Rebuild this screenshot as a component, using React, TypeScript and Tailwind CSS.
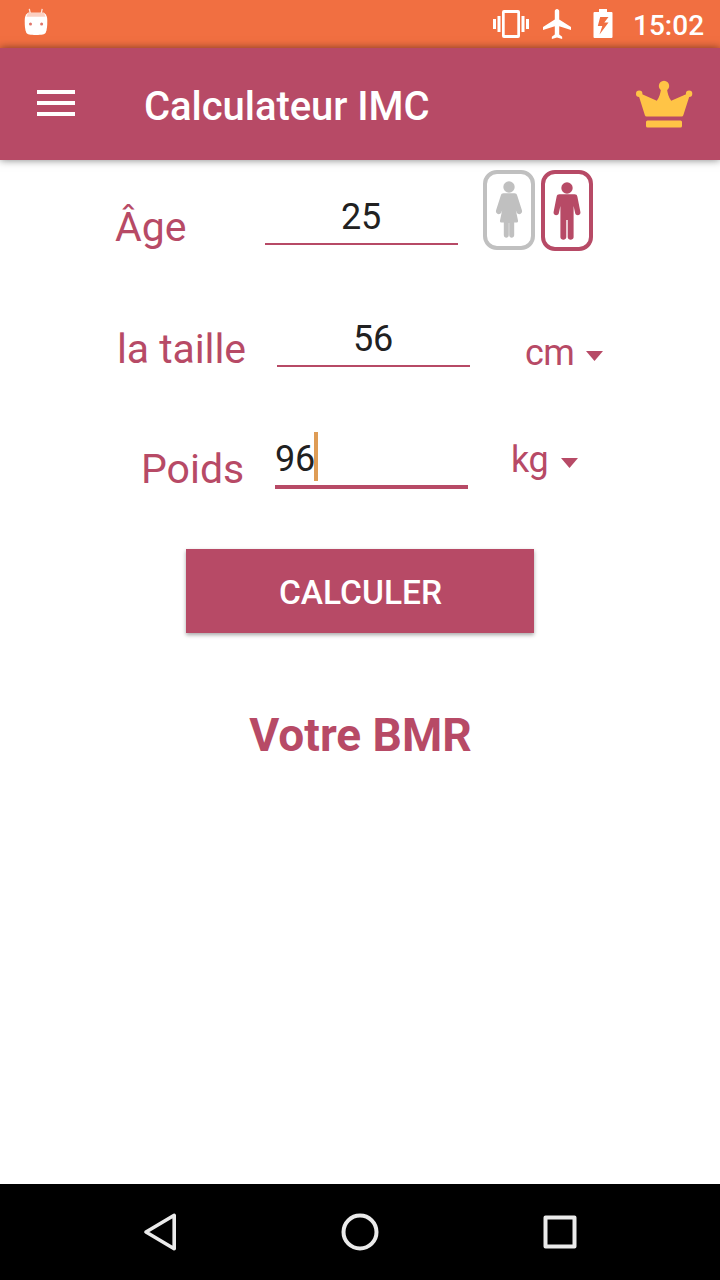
import type { ReactNode } from 'react'

type Field = {
  id: string
  label: string
  value: string
  row: string
  labelClass: string
  focused?: boolean
  unit?: string
  unitClass?: string
}

const fields: Field[] = [
  {
    id: 'age',
    label: 'Âge',
    value: '25',
    row: 'h-[122px] pl-[115px]',
    labelClass: 'w-[150px]',
  },
  {
    id: 'height',
    label: 'la taille',
    value: '56',
    row: 'h-[120px] pl-[117px]',
    labelClass: 'w-[160px] tracking-[-0.1px]',
    unit: 'cm',
    unitClass: 'mt-[47px] ml-[55px] w-[78px]',
  },
  {
    id: 'weight',
    label: 'Poids',
    value: '96',
    row: 'h-[87px] pl-[141px]',
    labelClass: 'w-[134px]',
    focused: true,
    unit: 'kg',
    unitClass: 'mt-[34px] ml-[43px] w-[67px]',
  },
]

function StatusBar() {
  return (
    <div className="flex h-12 items-center bg-[#f16f41] text-white">
      <svg className="ml-6 h-8 w-6 shrink-0" viewBox="0 0 24 32" fill="none">
        <path d="M6.5 6.5 5.3.8M17 6.5 18.2.8" stroke="#fde3da" strokeWidth="1.3" />
        <path d="M4 4.8h16c2.5 1.7 3.3 4 3.3 8 0 5-.3 9-1.6 12-.8 1.8-4 2.2-9.7 2.2s-8.9-.4-9.7-2.2C1 21.8.7 17.8.7 12.8c0-4 .8-6.3 3.3-8z" fill="#fff" />
        <path d="M4 4.8h16l1.5 4H2.300z" fill="#fbd0c2" />
        <circle cx="6.5" cy="16" r="1.5" fill="#e0756a" />
        <circle cx="17.6" cy="16" r="1.5" fill="#e0756a" />
      </svg>
      <svg className="ml-auto h-[30px] w-9" viewBox="0 0 36 30" fill="currentColor">
        <path fillRule="evenodd" d="M11 1h14a2 2 0 0 1 2 2v24a2 2 0 0 1-2 2H11a2 2 0 0 1-2-2V3a2 2 0 0 1 2-2zm.7 3v22h12.6V4z" />
        <path d="M0 10h3v10H0zM4.5 7h3v16h-3zM28.5 7h3v16h-3zM33 10h3v10h-3z" />
      </svg>
      <svg className="ml-[14px] h-[30px] w-7" viewBox="2 2 19 20" preserveAspectRatio="none" fill="currentColor">
        <path d="M21 16v-2l-8-5V3.5c0-.83-.67-1.5-1.5-1.5S10 2.67 10 3.5V9l-8 5v2l8-2.5V19l-2 1.5V22l3.5-1 3.5 1v-1.5L13 19v-5.5l8 2.5z" />
      </svg>
      <svg className="mt-[-1px] ml-[22px] h-[29px] w-5" viewBox="0 0 20 29" fill="currentColor">
        <path fillRule="evenodd" d="M6 0h8v3h4.5a1 1 0 0 1 1 1v24a1 1 0 0 1-1 1h-17a1 1 0 0 1-1-1V4a1 1 0 0 1 1-1H6zM7.2 8 4.8 17H9.3L6.5 25.5 15.5 13.5H11.3L15.5 8z" />
      </svg>
      <span className="mt-[3px] mr-[17px] ml-5 w-[70px] text-right text-[28px] leading-[48px] font-medium">15:02</span>
    </div>
  )
}

function AppBar() {
  return (
    <header className="relative flex h-28 items-center bg-[#b74a66] text-white shadow-[0_0_8px_rgba(0,0,0,0.5)]">
      <button className="-mt-[2px] ml-[37px] flex w-[38px] flex-col gap-[7px]" aria-label="Menu">
        <span className="h-1 w-full bg-white" />
        <span className="h-1 w-full bg-white" />
        <span className="h-1 w-full bg-white" />
      </button>
      <h1 className="mt-[6px] ml-[69px] text-[40px] leading-[48px] font-medium tracking-[-0.05px] whitespace-nowrap">
        Calculateur IMC
      </h1>
      <svg className="mr-[27px] ml-auto h-12 w-[57px]" viewBox="0 0 57 48" fill="#ffc446">
        <path d="M4.500 13.500 20.800 20.800C23.500 17 24.500 13 25 9h6c.5 4 1.500 8 4.200 11.800L51.800 13.500l2 1.500-6.500 20.300q-.4 1.200-1.600 1.200H10.500q-1.200 0-1.600-1.200L2.500 15z" />
        <circle cx="28" cy="5.900" r="5.200" />
        <circle cx="3.200" cy="13.800" r="3.200" />
        <circle cx="53.100" cy="13.800" r="3.200" />
        <rect x="10" y="40.500" width="36" height="7" rx="1.500" />
      </svg>
    </header>
  )
}

function GenderOption({ className, children }: { className: string; children: ReactNode }) {
  return (
    <button className={className}>
      <svg className="h-[58px] w-7" viewBox="0 0 28 58" fill="currentColor">
        <circle cx="14" cy="6" r="5.7" />
        {children}
      </svg>
    </button>
  )
}

function GenderPicker() {
  return (
    <div className="mt-[10px] ml-[25px] flex gap-[6px]">
      <GenderOption className="flex h-20 w-[52px] items-center justify-center rounded-[14px] border-4 border-[#c0c0c0] text-[#c0c0c0]">
        <path d="M8.500 12.300h11c1.500 0 2.300.7 2.700 2.100L27 29.500c.8 3.700-3.800 4.800-5.200 2.300L20.800 29l2.200 10.500c.2 1.300-.4 2-1.700 2h-2.100V54c0 3.600-5 3.600-5 0V42h-.4v12c0 3.600-5 3.600-5 0V41.500H6.700c-1.300 0-1.900-.7-1.700-2L7.200 29l-1 2.800C4.800 34.300.2 33.200 1 29.500l4.800-15.100c.4-1.400 1.200-2.100 2.700-2.100z" />
      </GenderOption>
      <GenderOption className="flex h-[81px] w-[52px] items-center justify-center rounded-[14px] border-4 border-[#b74a66] text-[#b74a66]">
        <path d="M6.500 12.300h15c1.700 0 2.500.8 2.900 2.400L27.400 30c.6 3.800-4.400 4.400-5.200 1.300L20.600 24v31.300c0 3.300-5.900 3.300-5.900 0V38h-1.400v17.300c0 3.300-5.900 3.300-5.900 0V24l-1.600 7.300C5 34.400 0 33.800.6 30l3-15.300c.4-1.600 1.200-2.400 2.900-2.400z" />
      </GenderOption>
    </div>
  )
}

function FieldRow({ field }: { field: Field }) {
  return (
    <div className={`flex items-start ${field.row}`}>
      <label className={`mt-[43px] text-[41px] leading-[48px] whitespace-nowrap text-[#b74a66] ${field.labelClass}`}>
        {field.label}
      </label>
      <div
        className={`mt-[33px] flex w-[193px] border-[#b74a66] text-[36px] leading-[48px] tracking-[-0.3px] text-[#212121] ${
          field.focused ? 'h-[54px] border-b-4' : 'h-[52px] justify-center border-b-2 pr-px'
        }`}
      >
        {field.value}
        {field.focused && <span className="-mt-[3px] -ml-px h-[49px] w-1 bg-[#de9c55]" />}
      </div>
      {field.unit ? (
        <div
          className={`flex items-center justify-between text-[36px] leading-[48px] tracking-[-0.5px] text-[#b74a66] ${field.unitClass}`}
        >
          {field.unit}
          <svg className="mt-[6px] h-[10px] w-[17px]" viewBox="0 0 17 10" fill="currentColor">
            <path d="M0 0h17L8.5 10z" />
          </svg>
        </div>
      ) : (
        <GenderPicker />
      )}
    </div>
  )
}

function NavigationBar() {
  return (
    <nav className="flex h-24 items-center justify-center gap-[152px] bg-black">
      <svg className="h-12 w-12" viewBox="0 0 48 48" fill="none" stroke="#ebebeb" strokeWidth="3.6" strokeLinejoin="round">
        <path d="M10 24 38.2 7.300v33.400z" />
      </svg>
      <svg className="h-12 w-12" viewBox="0 0 48 48" fill="none" stroke="#ebebeb" strokeWidth="4">
        <circle cx="24" cy="24" r="16.5" />
      </svg>
      <svg className="h-12 w-12" viewBox="0 0 48 48" fill="none" stroke="#ebebeb" strokeWidth="4" strokeLinejoin="round">
        <path d="M9.5 9.5h29v29h-29z" />
      </svg>
    </nav>
  )
}

export default function App() {
  return (
    <div className="flex h-[1280px] w-[720px] flex-col overflow-hidden bg-white font-['Roboto',sans-serif]">
      <StatusBar />
      <AppBar />
      <main className="flex flex-1 flex-col">
        {fields.map((field) => (
          <FieldRow key={field.id} field={field} />
        ))}
        <button className="mt-[60px] h-[84px] w-[348px] self-center bg-[#b74a66] pt-1 pl-px text-[33.5px] font-medium text-white shadow-[0_2px_4px_rgba(0,0,0,0.35)]">
          CALCULER
        </button>
        <h2 className="mt-[78px] pl-px text-center text-[46px] leading-[48px] font-bold text-[#b74a66]">Votre BMR</h2>
      </main>
      <NavigationBar />
    </div>
  )
}
